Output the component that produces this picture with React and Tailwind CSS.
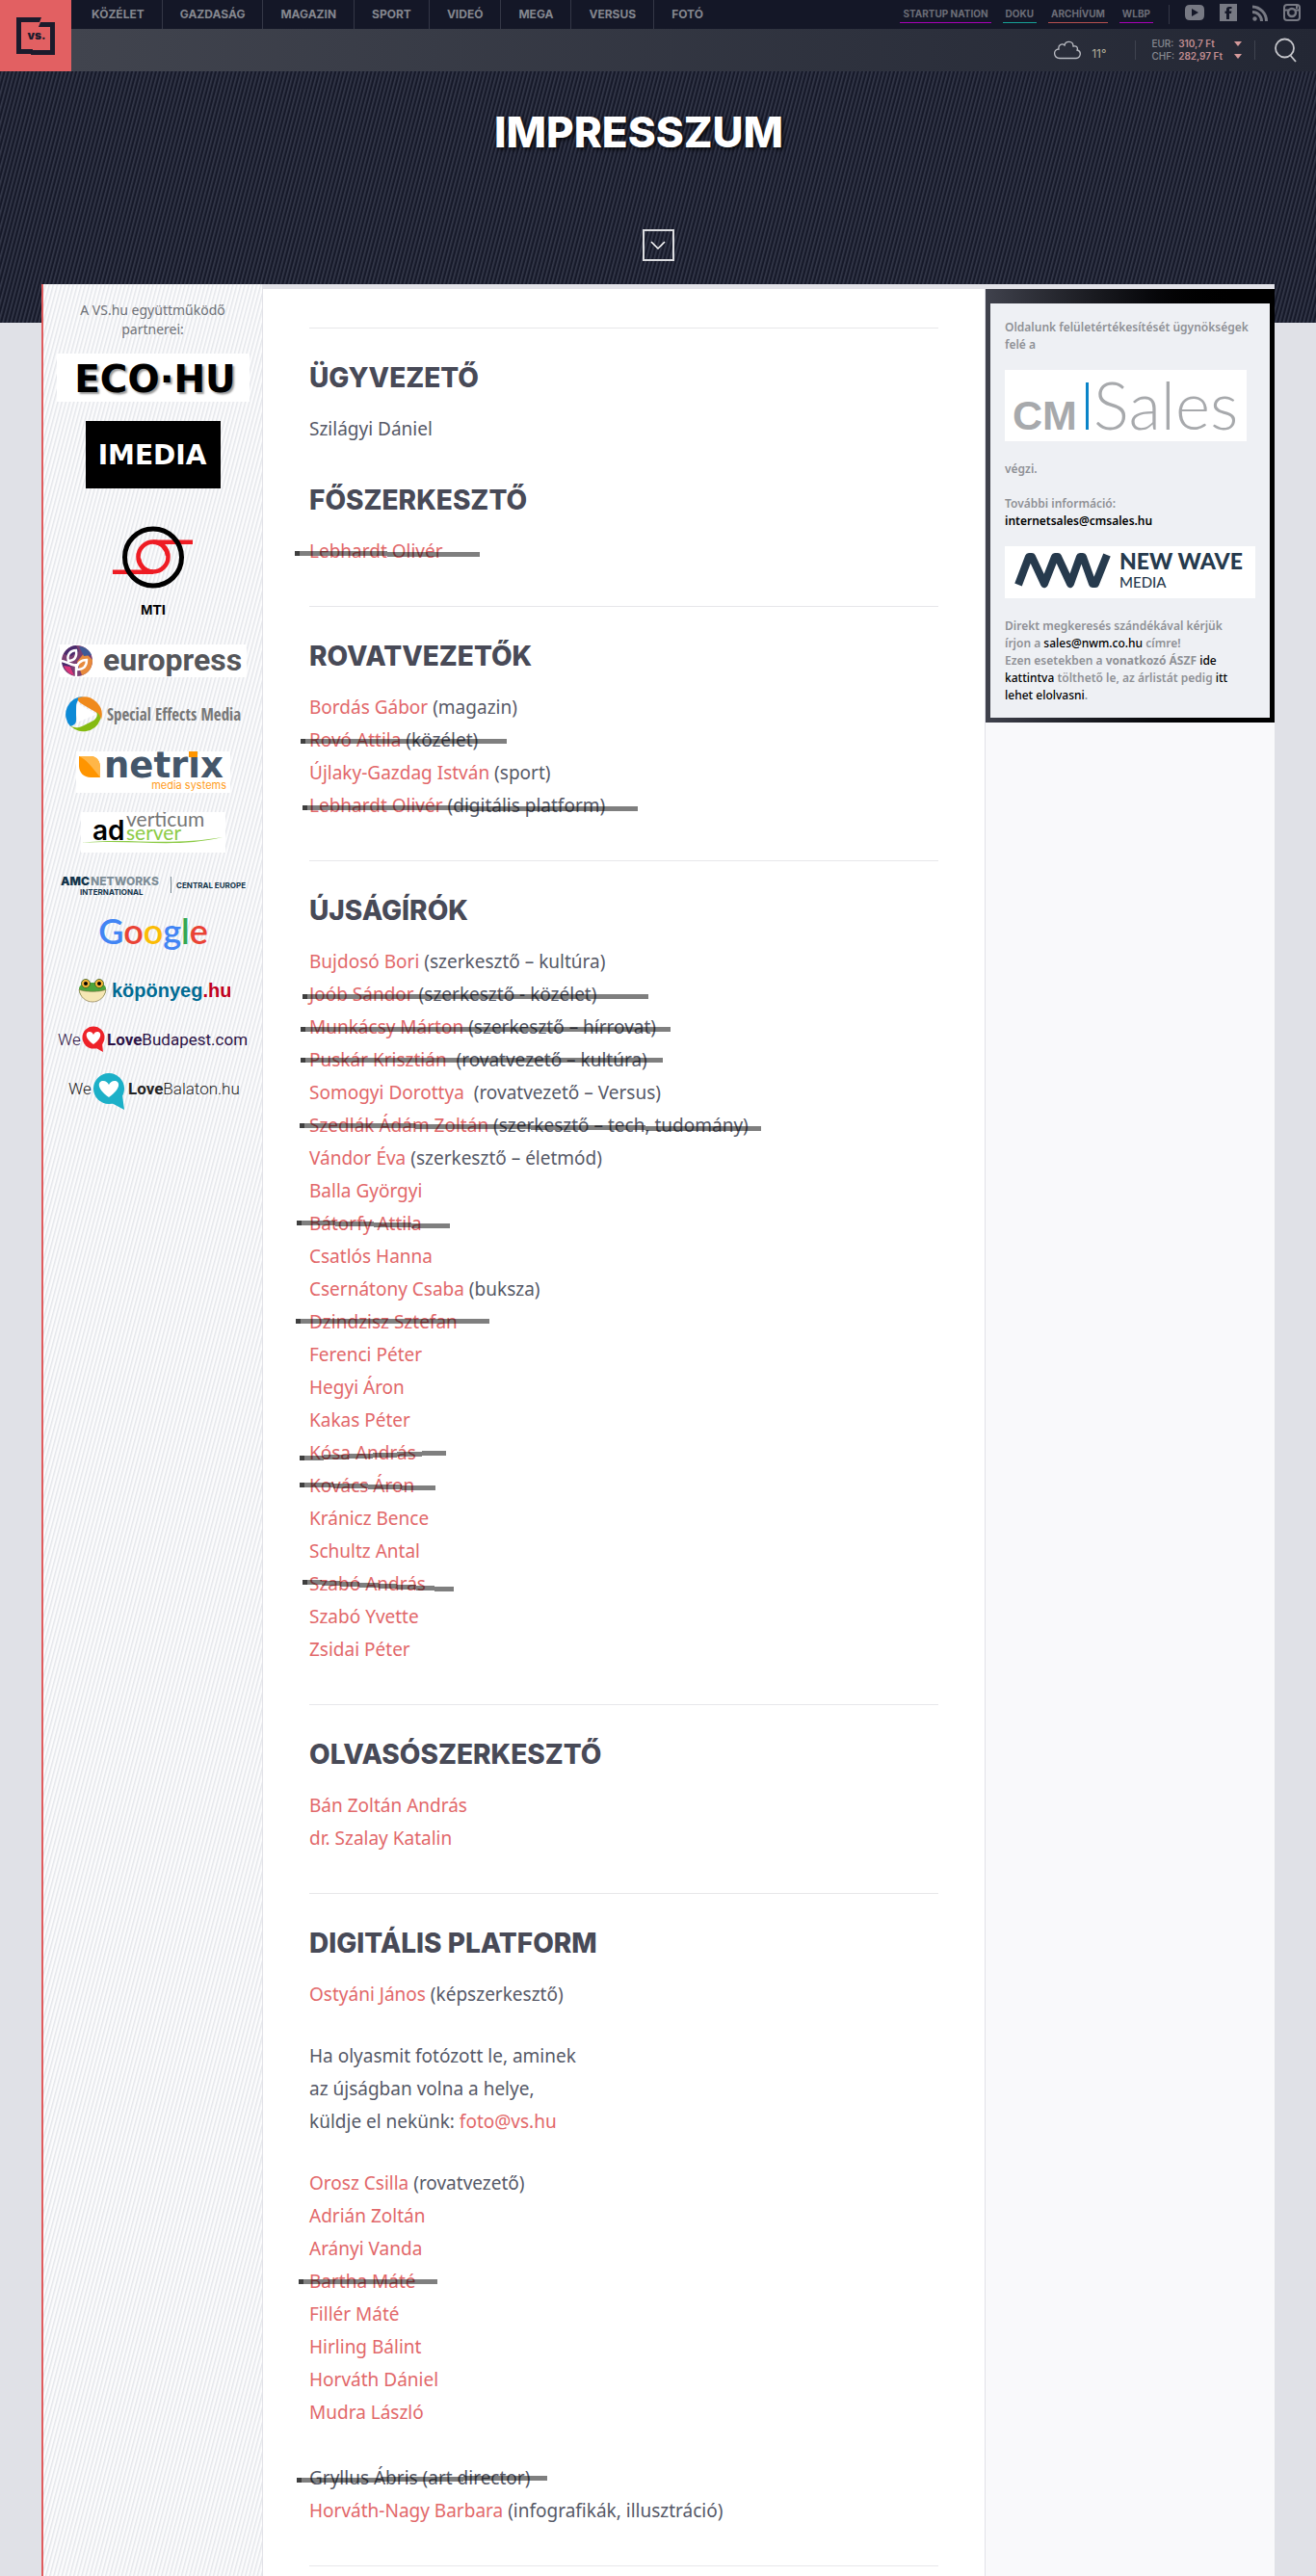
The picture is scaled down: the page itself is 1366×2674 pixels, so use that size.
import React from "react";

const NAV = ["KÖZÉLET", "GAZDASÁG", "MAGAZIN", "SPORT", "VIDEÓ", "MEGA", "VERSUS", "FOTÓ"];

const SUBNAV = [
  { label: "STARTUP NATION", line: "border-[#a800b8]" },
  { label: "DOKU", line: "border-[#17a096]" },
  { label: "ARCHÍVUM", line: "border-[#b5504f]" },
  { label: "WLBP", line: "border-[#a800b8]" },
];

// strike: [start x, end x, start y, end y]; x from the text's left edge, y from its baseline
const DIGITAL = [
  { name: "Orosz Csilla", role: "(rovatvezető)" },
  { name: "Adrián Zoltán" },
  { name: "Arányi Vanda" },
  { name: "Bartha Máté", strike: [-11, 133, -7, -7] },
  { name: "Fillér Máté" },
  { name: "Hirling Bálint" },
  { name: "Horváth Dániel" },
  { name: "Mudra László" },
];

const JOURNALISTS = [
  { name: "Bujdosó Bori", role: "(szerkesztő – kultúra)" },
  { name: "Joób Sándor", role: "(szerkesztő - közélet)", strike: [-7, 352, -5, -5] },
  { name: "Munkácsy Márton", role: "(szerkesztő – hírrovat)", strike: [-9, 375, -5, -5] },
  { name: "Puskár Krisztián", role: "\u00a0(rovatvezető – kultúra)", strike: [-9, 367, -7, -7] },
  { name: "Somogyi Dorottya", role: "\u00a0(rovatvezető – Versus)" },
  { name: "Szedlák Ádám Zoltán", role: "(szerkesztő – tech, tudomány)", strike: [-10, 469, -7, -4] },
  { name: "Vándor Éva", role: "(szerkesztő – életmód)" },
  { name: "Balla Györgyi" },
  { name: "Bátorfy Attila", strike: [-13, 146, -8, -5] },
  { name: "Csatlós Hanna" },
  { name: "Csernátony Csaba", role: "(buksza)" },
  { name: "Dzindzisz Sztefan", strike: [-14, 187, -8, -8] },
  { name: "Ferenci Péter" },
  { name: "Hegyi Áron" },
  { name: "Kakas Péter" },
  { name: "Kósa András", strike: [-10, 142, -2, -7] },
  { name: "Kovács Áron", strike: [-10, 131, -8, -5] },
  { name: "Kránicz Bence" },
  { name: "Schultz Antal" },
  { name: "Szabó András", strike: [-7, 150, -9, -2] },
  { name: "Szabó Yvette" },
  { name: "Zsidai Péter" },
];

function Strike({ line }) {
  const [x0, x1, y0, y1] = line;
  const steps = Math.abs(y1 - y0) + 1;
  const dir = Math.sign(y1 - y0);
  const len = (x1 - x0) / steps;
  return (
    <svg
      className="pointer-events-none absolute top-0 left-0 overflow-visible"
      width="1"
      height="34"
      shapeRendering="crispEdges"
      aria-hidden="true"
    >
      <g fill="#000" fillOpacity="0.5">
        <rect x={x0} y={24 + y0 - 2} width="5" height="5" />
        {Array.from({ length: steps }, (_, i) => (
          <rect
            key={i}
            x={Math.round(x0 + i * len)}
            y={24 + y0 + dir * i - 2}
            width={Math.round(x0 + (i + 1) * len) - Math.round(x0 + i * len)}
            height="5"
          />
        ))}
      </g>
    </svg>
  );
}

function People({ list }) {
  return (
    <ul className="mb-[30px]">
      {list.map((p) => (
        <li key={p.name} className="relative">
          {p.plain ? p.name : <a href="#" className="text-[#e2686a]">{p.name}</a>}
          {p.role && " " + p.role}
          {p.strike && <Strike line={p.strike} />}
        </li>
      ))}
    </ul>
  );
}

function Heading({ children }) {
  return (
    <h2 className="mb-[19px] font-[Inter,sans-serif] text-[28px] leading-[34px] font-extrabold text-[#484a57]">
      {children}
    </h2>
  );
}

function Rule() {
  return <hr className="mt-10 mb-[34px] border-0 border-t border-[#e7e7ea]" />;
}

function Partners() {
  return (
    <div className="flex flex-col items-center gap-5">
      <a href="#" aria-label="eco.hu">
        <svg width="200" height="50" className="bg-white">
          <text
            x="102"
            y="40"
            textAnchor="middle"
            fontFamily="DejaVu Sans, sans-serif"
            fontWeight="700"
            fontSize="39"
            className="[text-shadow:2px_2px_2px_rgba(0,0,0,0.4)]"
          >
            ECO·HU
          </text>
        </svg>
      </a>
      <a href="#" aria-label="Imedia">
        <svg width="140" height="70" className="bg-black">
          <text x="69" y="45" textAnchor="middle" fontFamily="DejaVu Sans, sans-serif" fontWeight="700" fontSize="28" fill="#fff">IMEDIA</text>
        </svg>
      </a>
      <a href="#" aria-label="MTI">
        <svg width="140" height="122" fill="none">
          <g stroke="#ee1c24" strokeWidth="4.5">
            <circle cx="70" cy="51" r="15.5" />
            <path d="M70 35.8H111M28 66.8H70M70 35.8c9 0 14 7 15 14M70 66.8c-9 0-14-7-15-14" />
          </g>
          <circle cx="70" cy="51.5" r="29.5" stroke="#000" strokeWidth="5" />
          <text x="70" y="111" textAnchor="middle" fontFamily="Liberation Sans, sans-serif" fontWeight="700" fontSize="15" fill="#000">MTI</text>
        </svg>
      </a>
      <a href="#" aria-label="europress">
        <svg width="194" height="34" className="bg-white">
          <circle cx="18" cy="17" r="16" fill="#7a3f72" />
          <path d="M4 10A16 16 0 0 1 17 1l3 6-8 5zM2 18l8 2 5 11A16 16 0 0 1 2 18z" fill="#4a2a6c" />
          <path d="M18 18l8-10 8 8c0 8-4 14-11 16z" fill="#e78a3c" />
          <path d="M20 2c6 0 11 4 13 9l-8 1z" fill="#3f5a96" />
          <path d="M4 22l7 1 4 9c-5-1-9-5-11-10z" fill="#d9357a" />
          <path d="M17 34V20M17 22C8 20 6 17 1 17M9 17C7 11 11 6 17 6c1 6-1 11-8 11zM18 26c-1-6 4-10 10-10 0 7-4 10-10 10z" fill="none" stroke="#fff" strokeWidth="2.4" />
          <text x="45" y="27" fontFamily="Roboto, sans-serif" fontWeight="700" fontSize="32" fill="#55565a">europress</text>
        </svg>
      </a>
      <a href="#" aria-label="Special Effects Media">
        <svg width="182" height="37">
          <path d="M19 0A18.5 18.5 0 0 0 5 31c4-1 6-3 6-6V11c0-6 3-10 8-11z" fill="#0d8ad6" />
          <path d="M13 1.5A18.5 18.5 0 0 1 37 24c-1-4-3-6-6-8L19 9C14 6 12 4 13 1.5z" fill="#f08a1c" />
          <path d="M4 29A18.5 18.5 0 0 0 36 24c1-3-1-6-4-8 2 4 0 7-3 9l-12 6c-5 2-9 2-13-2z" fill="#85bb12" />
          <path d="M12 7v20l20-8.5z" fill="#fff" />
          <text x="43" y="25" fontFamily="'Liberation Sans Narrow', 'Open Sans Condensed', Roboto, sans-serif" fontSize="17" fontWeight="500" fill="#777">Special Effects Media</text>
        </svg>
      </a>
      <a href="#" aria-label="netrix media systems">
        <svg width="160" height="43" className="bg-white">
          <path d="M3 5h12c7 0 10 6 10 12v10H15C8 27 3 22 3 15z" fill="#ff9500" />
          <path d="M3 5c8 4 12 9 22 22V17C25 10 22 5 15 5z" fill="#ffb648" />
          <text x="29" y="27" fontFamily="DejaVu Sans, sans-serif" fontWeight="700" fontSize="37" fill="#44566a">netrix</text>
          <rect x="117" y="0" width="9" height="6" fill="#ff9500" />
          <text x="156" y="39" textAnchor="end" fontFamily="Inter, sans-serif" fontSize="11" fill="#ff9c1a">media systems</text>
        </svg>
      </a>
      <a href="#" aria-label="adverticum adserver">
        <svg width="150" height="42" className="bg-white">
          <text x="47" y="15" fontFamily="Lato, sans-serif" fontSize="21" fill="#777">verticum</text>
          <text x="47" y="29" fontFamily="Lato, sans-serif" fontSize="21" fill="#8ccb45">server</text>
          <text x="12" y="29" fontFamily="Inter, sans-serif" fontWeight="600" fontSize="28" fill="#000">ad</text>
          <path d="M0 32c45-6 90 4 147-6-50 12-90 2-147 6z" fill="#8ccb45" />
        </svg>
      </a>
      <a href="#" aria-label="AMC Networks International Central Europe">
        <svg width="196" height="26" fontFamily="Inter, sans-serif">
          <text x="2" y="14" fontSize="12" fontWeight="900" fill="#12344a">AMC</text>
          <text x="33" y="14" fontSize="12" fontWeight="800" fill="#7d8d97">NETWORKS</text>
          <text x="22" y="24" fontSize="8" fontWeight="700" fill="#12344a">INTERNATIONAL</text>
          <path d="M116.5 5v17" stroke="#7d8d97" />
          <text x="122" y="17" fontSize="8" fontWeight="700" fill="#12344a">CENTRAL EUROPE</text>
        </svg>
      </a>
      <a href="#" aria-label="Google">
        <svg width="116" height="37" fontFamily="Lato, sans-serif">
          <text x="58" y="29" textAnchor="middle" fontWeight="600" fontSize="36">
            <tspan fill="#4285f4">G</tspan><tspan fill="#ea4335">o</tspan><tspan fill="#fbbc05">o</tspan><tspan fill="#4285f4">g</tspan><tspan fill="#34a853">l</tspan><tspan fill="#ea4335">e</tspan>
          </text>
        </svg>
      </a>
      <a href="#" aria-label="köpönyeg.hu">
        <svg width="160" height="36" fontFamily="'Liberation Sans', sans-serif" fontSize="20" fontWeight="700">
          <path d="M3 20C2 13 10 12 17 12s15 1 14 8c-1 7-7 11-14 11S4 27 3 20z" fill="#4ba43c" />
          <path d="M3 19c4 3 24 3 28 0-1 8-7 13-14 13S4 27 3 19z" fill="#f6e7b4" stroke="#7a6a3c" strokeWidth="0.6" />
          <g stroke="#2f5c23" strokeWidth="0.8">
            <circle cx="10" cy="13" r="4.5" fill="#f5b437" />
            <circle cx="24" cy="13" r="4.5" fill="#f5b437" />
          </g>
          <circle cx="10" cy="13" r="2" />
          <circle cx="24" cy="13" r="2" />
          <text x="37" y="27" fill="#006b93">köpönyeg<tspan fill="#c00020">.hu</tspan></text>
        </svg>
      </a>
      <a href="#" aria-label="We Love Budapest.com">
        <svg width="200" height="29" fontFamily="Roboto, sans-serif" fontSize="17" fill="#2c1245">
          <text x="1" y="21" fontWeight="300">We</text>
          <circle cx="38" cy="13" r="11.5" fill="#ee2229" />
          <path d="M39 23l9 5-1-9z" fill="#ee2229" />
          <path d="M38 20c-10-7-8-13-4-13 2 0 3 1 4 3 1-2 2-3 4-3 4 0 6 6-4 13z" fill="#fff" />
          <text x="52" y="21" fontWeight="700">Love<tspan fontWeight="400">Budapest.com</tspan></text>
        </svg>
      </a>
      <a href="#" aria-label="We Love Balaton.hu">
        <svg width="180" height="40" fontFamily="Roboto, sans-serif" fontSize="17" fill="#222">
          <text x="2" y="23" fontWeight="300">We</text>
          <circle cx="44" cy="17" r="16" fill="#1cb0c8" />
          <path d="M45 31l15 8-2-15z" fill="#1cb0c8" />
          <path d="M44 26c-14-10-11-17-6-17 3 0 5 2 6 4 1-2 3-4 6-4 5 0 8 7-6 17z" fill="#fff" />
          <text x="64" y="23" fontWeight="700">Love<tspan fontWeight="300">Balaton.hu</tspan></text>
        </svg>
      </a>
    </div>
  );
}

function Header() {
  return (
    <header className="flex font-[Inter,sans-serif]">
      <a href="#" aria-label="vs." className="flex h-[74px] w-[74px] shrink-0 items-center justify-center bg-[#e26062]">
        <svg width="42" height="42" viewBox="0 0 42 42">
          <path d="M1 2h26l-2 5H6v28h12l-1 5H1z" fill="#1b1b2c" />
          <path d="M26 7h15v34H16l1-5h19V12H24z" fill="#1b1b2c" />
          <text x="22" y="25" textAnchor="middle" fontSize="12" fontWeight="900" fill="#1b1b2c">vs.</text>
        </svg>
      </a>
      <div className="flex min-w-0 grow flex-col">
        <div className="flex h-[30px] justify-between bg-[#141727]">
          <nav className="flex pl-[3px]">
            {NAV.map((n, i) => (
              <a
                key={n}
                href="#"
                className={
                  "flex items-center px-[18px] text-[12px] leading-[18px] font-bold text-[#85878f] " +
                  (i < NAV.length - 1 ? "border-r border-[#343746]" : "")
                }
              >
                {n}
              </a>
            ))}
          </nav>
          <div className="flex items-center pr-4">
            <nav className="flex gap-3">
              {SUBNAV.map((s) => (
                <a key={s.label} href="#" className={"border-b px-[3px] pb-px text-[10px] leading-4 font-bold text-[#6c6e78] " + s.line}>
                  {s.label}
                </a>
              ))}
            </nav>
            <span className="mr-4 ml-4 h-5 w-px bg-[#343746]" />
            <div className="flex items-center gap-4 pb-1 text-[#777983]">
              <a href="#" aria-label="YouTube">
                <svg width="20" height="16" fill="currentColor"><path fillRule="evenodd" d="M5 0h10q5 0 5 5v6q0 5-5 5H5q-5 0-5-5V5q0-5 5-5zM7 4v8l7-4z" /></svg>
              </a>
              <a href="#" aria-label="Facebook">
                <svg width="18" height="18" fill="currentColor"><path fillRule="evenodd" d="M0 0h18v18H0zM7 16h3V10h2l.4-2.5H10V6q0-1 1-1h1.5V3H10Q7 3 7 5.5v2H5.5V10H7z" /></svg>
              </a>
              <a href="#" aria-label="RSS">
                <svg width="16" height="17" fill="none" stroke="currentColor" strokeWidth="3"><circle cx="2.5" cy="14.5" r="2.2" fill="currentColor" stroke="none" /><path d="M0 7.5a9.5 9.5 0 0 1 9.5 9.5M0 2a15 15 0 0 1 14.5 15" /></svg>
              </a>
              <a href="#" aria-label="Instagram">
                <svg width="18" height="18" fill="none" stroke="currentColor" strokeWidth="2"><rect x="1" y="1" width="16" height="16" rx="3" /><circle cx="9" cy="9" r="4" strokeWidth="2.5" /><path d="M1 6.5h4.5M12.5 6.5H17M14 2v3" /></svg>
              </a>
            </div>
          </div>
        </div>
        <div className="flex h-11 items-center justify-end bg-linear-to-r from-[#41444e] to-[#232734] pr-5">
          <svg width="28" height="20" fill="none" stroke="#b9bbc2" strokeWidth="1.3" aria-hidden="true">
            <path d="M6 18.500C-1 18-1 9 5 9 4 4 9 3 11 5c1-5 9-5 9 1 4-1 5 2 4 4 5 1 4 8-1 8.500z" />
          </svg>
          <span className="mt-2 ml-[11px] text-[12px] leading-4 text-[#b5b09c]">11°</span>
          <span className="mr-4 ml-[30px] h-5 w-px bg-[#3f434f]" />
          <dl className="grid grid-cols-[auto_auto_auto] items-center gap-x-1 text-[10px] leading-[13px] font-medium text-[#888a92]">
            <dt>EUR:</dt>
            <dd className="font-semibold text-[#c28d91]">310,7 Ft</dd>
            <dd><svg width="16" height="5" aria-hidden="true"><path d="M8 0h8l-4 5z" fill="#d49a9b" /></svg></dd>
            <dt>CHF:</dt>
            <dd className="font-semibold text-[#c28d91]">282,97 Ft</dd>
            <dd><svg width="16" height="5" aria-hidden="true"><path d="M8 0h8l-4 5z" fill="#d49a9b" /></svg></dd>
          </dl>
          <span className="mr-5 ml-[13px] h-5 w-px bg-[#3f434f]" />
          <button type="button" aria-label="Keresés">
            <svg width="23" height="26" fill="none" stroke="#c5c6cb" strokeWidth="1.8">
              <circle cx="10.5" cy="11" r="9.5" />
              <path d="M16 18l6 7" />
            </svg>
          </button>
        </div>
      </div>
    </header>
  );
}

function SalesBox() {
  return (
    <section className="bg-linear-to-r from-[#40424d] to-black to-90% px-[5px] pt-[15px] pb-[5px]">
      <div className="bg-[#eef0f4] px-[15px] pt-4 pb-[14px] font-['Noto_Sans',sans-serif] text-[12px] leading-[18px] font-semibold text-[#8f9196]">
        <p>Oldalunk felületértékesítését ügynökségek felé a</p>
        <svg className="mt-[17px] mb-5 bg-white" width="251" height="74" fill="#a7a9ac" role="img" aria-label="CM Sales">
          <text x="8" y="62" fontFamily="Liberation Sans, sans-serif" fontWeight="700" fontSize="43">CM</text>
          <rect x="84" y="13" width="3" height="49" fill="#0a84c8" />
          <text x="92" y="62" fontFamily="Lato, sans-serif" fontWeight="300" fontSize="69">Sales</text>
        </svg>
        <p>végzi.</p>
        <p className="mt-[18px]">
          További információ:
          <br />
          <a href="#" className="text-black">internetsales@cmsales.hu</a>
        </p>
        <svg className="mt-[17px] mb-5 bg-white" width="260" height="54" role="img" aria-label="New Wave Media">
          <path d="M14 40L25 11H28L41 39L52 11H55L68 39L78 11H81L91 39H94L106 9" fill="none" stroke="#263a4d" strokeWidth="8" strokeLinejoin="round" />
          <text x="119" y="24" fontFamily="Lato, sans-serif" fontWeight="900" fontSize="23" fill="#263a4d">NEW WAVE</text>
          <text x="119" y="43" fontFamily="Lato, sans-serif" fontWeight="500" fontSize="15" fill="#263a4d">MEDIA</text>
        </svg>
        <p>
          Direkt megkeresés szándékával kérjük
          <br />
          írjon a <a href="#" className="font-medium text-black">sales@nwm.co.hu</a> címre!
          <br />
          Ezen esetekben a <strong className="font-bold">vonatkozó ÁSZF</strong>{" "}
          <a href="#" className="font-medium text-black">ide kattintva</a> tölthető le, az árlistát pedig{" "}
          <a href="#" className="font-medium text-black">itt lehet elolvasni</a>.
        </p>
      </div>
    </section>
  );
}

export default function App() {
  return (
    <div className="bg-[#e0e1e7]">
      <Header />
      <div className="flex flex-col items-center bg-[repeating-linear-gradient(105deg,#161929_0px,#161929_1px,#34384a_2px,#2b2f3f_3px,#161929_4px)] pt-[35px] pb-16">
        <h1 className="mr-10 font-[Inter,sans-serif] text-[44px] leading-[56px] font-extrabold text-white [text-shadow:2px_2px_4px_rgba(0,0,0,0.8)]">
          IMPRESSZUM
        </h1>
        <button type="button" aria-label="Tovább" className="mt-[73px] flex h-[33px] w-[33px] items-center justify-center border-2 border-[#dcdde0]">
          <svg width="16" height="10" fill="none" stroke="#fff" strokeWidth="1.5"><path d="M1 1l7 7 7-7" /></svg>
        </button>
      </div>

      <div className="mx-[43px] -mt-10 flex">
        <aside className="w-[229px] shrink-0 border-l-2 border-[#e05c5e] bg-[repeating-linear-gradient(105deg,#fcfcfd_0px,#fcfcfd_1px,#e4e6ea_2px,#f0f1f4_3px,#fcfcfd_4px)] pt-[17px]">
          <p className="mx-auto mb-[15px] w-44 text-center font-['Noto_Sans',sans-serif] text-[14px] leading-5 text-[#6f7177]">
            A VS.hu együttműködő partnerei:
          </p>
          <Partners />
        </aside>
        <div className="flex min-w-0 grow border-t-5 border-[#e2e2e8]">
          <main className="min-w-0 grow border-x border-[#e2e2e8] bg-white px-12 pb-[11px] font-['Noto_Sans',sans-serif] text-[19px] leading-[34px] font-normal text-[#565967]">
            <Rule />
            <Heading>ÜGYVEZETŐ</Heading>
            <p className="mb-10">Szilágyi Dániel</p>
            <Heading>FŐSZERKESZTŐ</Heading>
            <People list={[{ name: "Lebhardt Olivér", strike: [-15, 177, -5, -4] }]} />
            <Rule />
            <Heading>ROVATVEZETŐK</Heading>
            <People
              list={[
                { name: "Bordás Gábor", role: "(magazin)" },
                { name: "Rovó Attila", role: "(közélet)", strike: [-9, 205, -6, -6] },
                { name: "Újlaky-Gazdag István", role: "(sport)" },
                { name: "Lebhardt Olivér", role: "(digitális platform)", strike: [-7, 341, -5, -4] },
              ]}
            />
            <Rule />
            <Heading>ÚJSÁGÍRÓK</Heading>
            <People list={JOURNALISTS} />
            <Rule />
            <Heading>OLVASÓSZERKESZTŐ</Heading>
            <People list={[{ name: "Bán Zoltán András" }, { name: "dr. Szalay Katalin" }]} />
            <Rule />
            <Heading>DIGITÁLIS PLATFORM</Heading>
            <People list={[{ name: "Ostyáni János", role: "(képszerkesztő)" }]} />
            <p className="mb-[30px]">
              Ha olyasmit fotózott le, aminek
              <br />
              az újságban volna a helye,
              <br />
              küldje el nekünk: <a href="#" className="text-[#e2686a]">foto@vs.hu</a>
            </p>
            <People list={DIGITAL} />
            <div className="pt-1">
              <People
                list={[
                  { name: "Gryllus Ábris (art director)", plain: true, strike: [-13, 247, -5, -7] },
                  { name: "Horváth-Nagy Barbara", role: "(infografikák, illusztráció)" },
                ]}
              />
            </div>
            <hr className="mt-10 border-0 border-t border-[#e7e7ea]" />
          </main>
          <aside className="w-[300px] shrink-0 bg-[#f9f9fb]">
            <SalesBox />
          </aside>
        </div>
      </div>
    </div>
  );
}
